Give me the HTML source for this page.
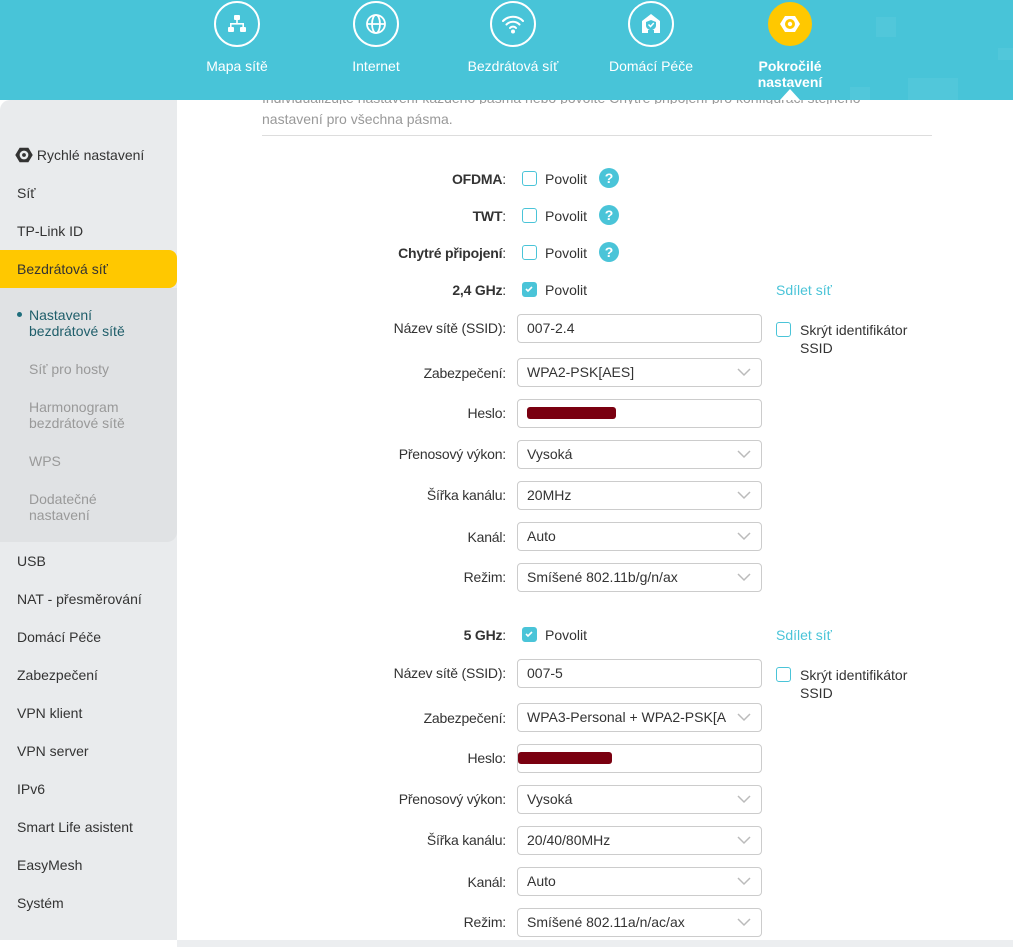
<!DOCTYPE html>
<html><head><meta charset="utf-8"><style>
*{margin:0;padding:0;box-sizing:border-box}
body{width:1013px;height:947px;overflow:hidden;position:relative;font-family:"Liberation Sans",sans-serif;background:#fff;color:#333}
#hdr{position:absolute;left:0;top:0;width:1013px;height:100px;background:#48c4d8}
.sq{position:absolute;background:rgba(255,255,255,.05)}
.nav{position:absolute;top:0;width:140px;text-align:center;color:#fff;font-size:14px}
.nav .c{width:46px;height:46px;border:2px solid #fff;border-radius:50%;margin:1px auto 0;display:flex;align-items:center;justify-content:center}
.nav .t{margin-top:11px;line-height:16px}
#side{position:absolute;left:0;top:100px;width:177px;height:840px;background:#e9ebed;border-top-left-radius:10px}
.si{position:absolute;left:17px;font-size:14px;color:#333}
#sub{position:absolute;left:0;top:288px;width:177px;height:254px;background:#e0e2e4;border-bottom-right-radius:10px}
.ss{position:absolute;left:29px;font-size:14px;color:#999;line-height:16px}
#act{position:absolute;left:0;top:250px;width:177px;height:38px;background:#ffc800;border-top-right-radius:8px;border-bottom-right-radius:8px}
.lb{position:absolute;right:507px;font-size:14px;color:#333;text-align:right;white-space:nowrap;letter-spacing:-0.2px}
.lb b{font-weight:bold}
.cb{position:absolute;left:522px;width:15px;height:15px;border:1.5px solid #4ac4d8;border-radius:3px;background:#fff}
.cb.on{background:#4ac4d8}
.pv{position:absolute;left:545px;font-size:14px}
.hq{position:absolute;left:599px;width:20px;height:20px;border-radius:50%;background:#4ac4d8;color:#fff;font-weight:bold;font-size:14px;text-align:center;line-height:20px}
.in{position:absolute;left:517px;width:245px;height:29px;border:1px solid #ccc;border-radius:4px;font-size:14px;padding-left:9px;line-height:27px;background:#fff;white-space:nowrap;overflow:hidden}
.in .ar{position:absolute;right:10px;top:8px}
.in .tx{display:inline-block;width:200px;overflow:hidden;vertical-align:top}
.red{position:absolute;height:12px;background:#7a0010;border-radius:3px}
.lk{position:absolute;left:776px;font-size:14px;color:#4ac4d8}
.hide{position:absolute;left:776px;font-size:14px;line-height:18px}
.hide .cb{left:0;top:1px}
.hide span{position:absolute;left:24px;white-space:nowrap}
</style></head><body>
<div id="hdr">
<div class="sq" style="left:876px;top:17px;width:20px;height:20px"></div>
<div class="sq" style="left:998px;top:48px;width:15px;height:12px"></div>
<div class="sq" style="left:908px;top:78px;width:50px;height:22px"></div>
<div class="sq" style="left:850px;top:87px;width:20px;height:13px"></div>
<div class="nav" style="left:167px"><div class="c"><svg width="24" height="24" viewBox="0 0 24 24" fill="#fff"><rect x="9" y="3" width="6" height="5" rx="1"/><rect x="3" y="15" width="6" height="5" rx="1"/><rect x="15" y="15" width="6" height="5" rx="1"/><path d="M11.2 8h1.6v3H19v4h-1.6v-2.4H6.6V15H5v-4h6.2z"/></svg></div><div class="t">Mapa sítě</div></div>
<div class="nav" style="left:306px"><div class="c"><svg width="24" height="24" viewBox="0 0 24 24" fill="none" stroke="#fff" stroke-width="1.8"><circle cx="12" cy="12" r="9"/><ellipse cx="12" cy="12" rx="4" ry="9"/><path d="M3 12h18"/></svg></div><div class="t">Internet</div></div>
<div class="nav" style="left:443px"><div class="c"><svg width="26" height="24" viewBox="0 0 26 24" fill="none" stroke="#fff" stroke-width="2" stroke-linecap="round"><path d="M3 9a14 14 0 0 1 20 0M6.5 12.5a9 9 0 0 1 13 0M10 16a4 4 0 0 1 6 0"/><circle cx="13" cy="19.5" r="1" fill="#fff"/></svg></div><div class="t">Bezdrátová síť</div></div>
<div class="nav" style="left:581px"><div class="c"><svg width="24" height="24" viewBox="0 0 24 24" fill="#fff"><path d="M12 2 3 9v12h6v-3h6v3h6V9z"/><path d="M12 8l-5 2v3.5c0 2.5 2.2 4 5 5 2.8-1 5-2.5 5-5V10z" fill="#48c4d8"/><path d="M9.5 12.5l2 2 3.3-3.5" stroke="#fff" stroke-width="1.5" fill="none"/></svg></div><div class="t">Domácí Péče</div></div>
<div class="nav" style="left:720px"><div class="c" style="background:#ffc800;border-color:#ffc800;width:44px;height:44px;margin-top:2px"><svg width="24" height="24" viewBox="0 0 24 24"><path d="M7 4h10l5 8-5 8H7l-5-8z" fill="#fff"/><circle cx="12" cy="12" r="5" fill="#ffc800"/><circle cx="12" cy="12" r="2.2" fill="#fff"/></svg></div><div class="t" style="font-weight:bold;margin-top:12px">Pokročilé<br>nastavení</div></div>
<div style="position:absolute;left:780px;top:89px;width:0;height:0;border-left:10px solid transparent;border-right:10px solid transparent;border-bottom:11px solid #fff"></div>
</div>
<div id="side">
<div class="si" style="top:47px;left:15px"><svg width="18" height="16" viewBox="0 0 24 22" style="vertical-align:-3px"><path d="M6 1h12l6 10-6 10H6L0 11z" fill="#333"/><circle cx="12" cy="11" r="6" fill="#e9ebed"/><circle cx="12" cy="11" r="2.6" fill="#333"/></svg> Rychlé nastavení</div>
<div class="si" style="top:85px">Síť</div>
<div class="si" style="top:123px">TP-Link ID</div>
</div>
<div id="sub"></div>
<div id="act"></div>
<div class="si" style="top:261px">Bezdrátová síť</div>
<div style="position:absolute;left:17px;top:312px;width:5px;height:5px;border-radius:50%;background:#1f6e7c"></div>
<div class="ss" style="top:307px;color:#1f5e6a">Nastavení<br>bezdrátové sítě</div>
<div class="ss" style="top:361px">Síť pro hosty</div>
<div class="ss" style="top:399px">Harmonogram<br>bezdrátové sítě</div>
<div class="ss" style="top:453px">WPS</div>
<div class="ss" style="top:491px">Dodatečné<br>nastavení</div>
<div class="si" style="top:553px">USB</div>
<div class="si" style="top:591px">NAT - přesměrování</div>
<div class="si" style="top:629px">Domácí Péče</div>
<div class="si" style="top:667px">Zabezpečení</div>
<div class="si" style="top:705px">VPN klient</div>
<div class="si" style="top:743px">VPN server</div>
<div class="si" style="top:781px">IPv6</div>
<div class="si" style="top:819px">Smart Life asistent</div>
<div class="si" style="top:857px">EasyMesh</div>
<div class="si" style="top:895px">Systém</div>
<div style="position:absolute;left:177px;top:940px;width:836px;height:7px;background:#eceef0"></div>

<div style="position:absolute;left:262px;top:100px;font-size:14px;color:#999;line-height:16px;height:4px;overflow:hidden;white-space:nowrap"><div style="margin-top:-10px">Individualizujte nastavení každého pásma nebo povolte Chytré připojení pro konfiguraci stejného</div></div>
<div style="position:absolute;left:262px;top:111px;font-size:14px;color:#999">nastavení pro všechna pásma.</div>
<div style="position:absolute;left:262px;top:135px;width:670px;height:1px;background:#ddd"></div>

<div class="lb" style="top:171px"><b>OFDMA</b>:</div><div class="cb" style="top:171px"></div><div class="pv" style="top:171px">Povolit</div><div class="hq" style="top:168px">?</div>
<div class="lb" style="top:208px"><b>TWT</b>:</div><div class="cb" style="top:208px"></div><div class="pv" style="top:208px">Povolit</div><div class="hq" style="top:205px">?</div>
<div class="lb" style="top:245px"><b>Chytré připojení</b>:</div><div class="cb" style="top:245px"></div><div class="pv" style="top:245px">Povolit</div><div class="hq" style="top:242px">?</div>

<div class="lb" style="top:282px"><b>2,4 GHz</b>:</div><div class="cb on" style="top:282px"><svg width="12" height="12" viewBox="0 0 12 12" style="position:absolute;left:0;top:0"><path d="M3 6l2 2 4-4" stroke="#fff" stroke-width="1.6" fill="none"/></svg></div><div class="pv" style="top:282px">Povolit</div><div class="lk" style="top:282px">Sdílet síť</div>
<div class="lb" style="top:320px">Název sítě (SSID):</div><div class="in" style="top:314px">007-2.4</div>
<div class="hide" style="top:321px"><div class="cb"></div><span>Skrýt identifikátor<br>SSID</span></div>
<div class="lb" style="top:365px">Zabezpečení:</div><div class="in" style="top:358px">WPA2-PSK[AES]<svg class="ar" width="14" height="10" viewBox="0 0 14 10"><path d="M1 2l6 6 6-6" stroke="#bbb" stroke-width="1.5" fill="none"/></svg></div>
<div class="lb" style="top:405px">Heslo:</div><div class="in" style="top:399px"></div><div class="red" style="left:527px;top:407px;width:89px"></div>
<div class="lb" style="top:446px">Přenosový výkon:</div><div class="in" style="top:440px">Vysoká<svg class="ar" width="14" height="10" viewBox="0 0 14 10"><path d="M1 2l6 6 6-6" stroke="#bbb" stroke-width="1.5" fill="none"/></svg></div>
<div class="lb" style="top:487px">Šířka kanálu:</div><div class="in" style="top:481px">20MHz<svg class="ar" width="14" height="10" viewBox="0 0 14 10"><path d="M1 2l6 6 6-6" stroke="#bbb" stroke-width="1.5" fill="none"/></svg></div>
<div class="lb" style="top:529px">Kanál:</div><div class="in" style="top:522px">Auto<svg class="ar" width="14" height="10" viewBox="0 0 14 10"><path d="M1 2l6 6 6-6" stroke="#bbb" stroke-width="1.5" fill="none"/></svg></div>
<div class="lb" style="top:569px">Režim:</div><div class="in" style="top:563px">Smíšené 802.11b/g/n/ax<svg class="ar" width="14" height="10" viewBox="0 0 14 10"><path d="M1 2l6 6 6-6" stroke="#bbb" stroke-width="1.5" fill="none"/></svg></div>

<div class="lb" style="top:627px"><b>5 GHz</b>:</div><div class="cb on" style="top:627px"><svg width="12" height="12" viewBox="0 0 12 12" style="position:absolute;left:0;top:0"><path d="M3 6l2 2 4-4" stroke="#fff" stroke-width="1.6" fill="none"/></svg></div><div class="pv" style="top:627px">Povolit</div><div class="lk" style="top:627px">Sdílet síť</div>
<div class="lb" style="top:665px">Název sítě (SSID):</div><div class="in" style="top:659px">007-5</div>
<div class="hide" style="top:666px"><div class="cb"></div><span>Skrýt identifikátor<br>SSID</span></div>
<div class="lb" style="top:710px">Zabezpečení:</div><div class="in" style="top:703px"><span class="tx">WPA3-Personal + WPA2-PSK[AES]</span><svg class="ar" width="14" height="10" viewBox="0 0 14 10"><path d="M1 2l6 6 6-6" stroke="#bbb" stroke-width="1.5" fill="none"/></svg></div>
<div class="lb" style="top:750px">Heslo:</div><div class="in" style="top:744px"></div><div class="red" style="left:518px;top:752px;width:94px"></div>
<div class="lb" style="top:791px">Přenosový výkon:</div><div class="in" style="top:785px">Vysoká<svg class="ar" width="14" height="10" viewBox="0 0 14 10"><path d="M1 2l6 6 6-6" stroke="#bbb" stroke-width="1.5" fill="none"/></svg></div>
<div class="lb" style="top:832px">Šířka kanálu:</div><div class="in" style="top:826px">20/40/80MHz<svg class="ar" width="14" height="10" viewBox="0 0 14 10"><path d="M1 2l6 6 6-6" stroke="#bbb" stroke-width="1.5" fill="none"/></svg></div>
<div class="lb" style="top:874px">Kanál:</div><div class="in" style="top:867px">Auto<svg class="ar" width="14" height="10" viewBox="0 0 14 10"><path d="M1 2l6 6 6-6" stroke="#bbb" stroke-width="1.5" fill="none"/></svg></div>
<div class="lb" style="top:914px">Režim:</div><div class="in" style="top:908px">Smíšené 802.11a/n/ac/ax<svg class="ar" width="14" height="10" viewBox="0 0 14 10"><path d="M1 2l6 6 6-6" stroke="#bbb" stroke-width="1.5" fill="none"/></svg></div>
</body></html>
